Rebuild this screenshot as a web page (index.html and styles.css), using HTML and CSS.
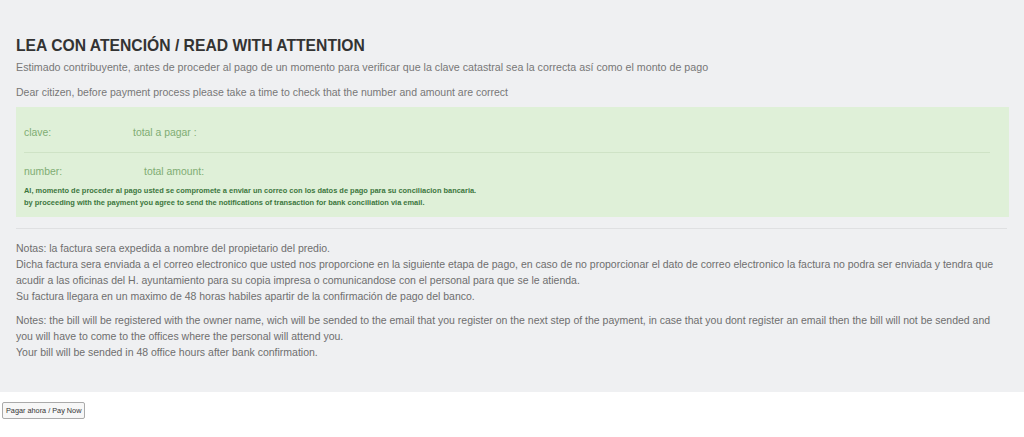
FILE: index.html
```html
<!DOCTYPE html>
<html lang="es">
  <head>
    <meta charset="UTF-8" />
    <meta name="viewport" content="width=device-width, initial-scale=1.0" />
    <title>Pago predial</title>
    <link rel="stylesheet" href="styles.css">
  </head>
  <body>
    <div class="notice-panel">
      <h2 class="notice-title">LEA CON ATENCIÓN / READ WITH ATTENTION</h2>
      <p class="intro-line">Estimado contribuyente, antes de proceder al pago de un momento para verificar que la clave catastral sea la correcta así como el monto de pago</p>
      <p class="intro-line second">Dear citizen, before payment process please take a time to check that the number and amount are correct</p>

      <div class="payment-box">
        <div class="payment-row">
          <span class="payment-label">clave:</span>
          <span class="payment-label">total a pagar :</span>
        </div>
        <hr class="payment-divider" />
        <div class="payment-row">
          <span class="payment-label wide">number:</span>
          <span class="payment-label">total amount:</span>
        </div>
        <p class="payment-warning">
          Al, momento de proceder al pago usted se compromete a enviar un correo con los datos de pago para su conciliacion bancaria.<br />
          by proceeding with the payment you agree to send the notifications of transaction for bank conciliation via email.
        </p>
      </div>

      <hr class="panel-divider" />

      <p class="notes">
        Notas: la factura sera expedida a nombre del propietario del predio.<br />
        Dicha factura sera enviada a el correo electronico que usted nos proporcione en la siguiente etapa de pago, en caso de no proporcionar el dato de correo electronico la factura no podra ser enviada y tendra que acudir a las oficinas del H. ayuntamiento para su copia impresa o comunicandose con el personal para que se le atienda.<br />
        Su factura llegara en un maximo de 48 horas habiles apartir de la confirmación de pago del banco.
      </p>
      <p class="notes second">
        Notes: the bill will be registered with the owner name, wich will be sended to the email that you register on the next step of the payment, in case that you dont register an email then the bill will not be sended and you will have to come to the offices where the personal will attend you.<br />
        Your bill will be sended in 48 office hours after bank confirmation.
      </p>
    </div>

    <button class="pay-button">Pagar ahora / Pay Now</button>
  </body>
</html>
```

FILE: styles.css
```css
* {
  margin: 0;
  padding: 0;
  box-sizing: border-box;
  font-family: "Liberation Sans", Arial, sans-serif;
}

body {
  background-color: white;
}

.notice-panel {
  background-color: #eff0f2;
  padding: 36px 15px 32px 16px;
}

.notice-title {
  font-size: 15.7px;
  line-height: 20px;
  font-weight: bold;
  color: #333;
  margin-bottom: 3px;
}

.intro-line {
  font-size: 10.7px;
  line-height: 16px;
  color: #777;
}

.intro-line.second {
  font-size: 10.5px;
  margin-top: 9px;
  margin-bottom: 7px;
}

.payment-box {
  background-color: #dff0d8;
  padding: 18px 8px 8px 8px;
}

.payment-row {
  display: flex;
  font-size: 10.4px;
  line-height: 16px;
}

.payment-label {
  color: #80ad73;
  width: 109px;
}

.payment-label.wide {
  width: 120px;
}

.payment-divider {
  border: none;
  border-top: 1px solid #cfe3c6;
  margin: 11px 11px 11px 0;
}

.payment-warning {
  margin-top: 5px;
  font-size: 7.45px;
  line-height: 12px;
  font-weight: bold;
  color: #3c763d;
}

.panel-divider {
  border: none;
  border-top: 1px solid #dfe0e2;
  margin: 11px 2px 11px 0;
}

.notes {
  font-size: 10.5px;
  line-height: 16px;
  color: #6e6e6e;
}

.notes.second {
  margin-top: 8px;
}

.pay-button {
  margin: 10px 0 0 2px;
  font-size: 7.3px;
  padding: 3px 3px;
  color: #333;
  background-color: #f7f7f7;
  border: 1px solid #aaa;
  border-radius: 2px;
}
```
